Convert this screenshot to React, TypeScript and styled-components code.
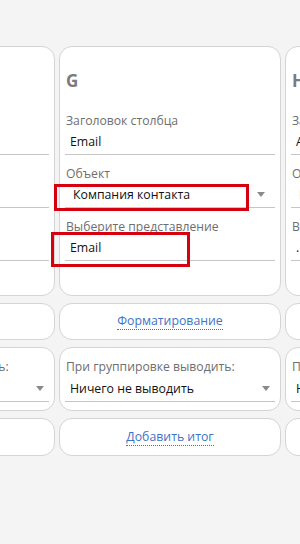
import React from 'react';
import styled, { createGlobalStyle } from 'styled-components';

const GlobalStyle = createGlobalStyle`
  html, body {
    margin: 0;
    padding: 0;
    background: #f4f4f4;
    overflow: hidden;
    font-family: "Open Sans", "Noto Sans", Arial, sans-serif;
  }
`;

const Viewport = styled.div`
  width: 300px;
  height: 544px;
  overflow: hidden;
  padding-top: 46px;
  box-sizing: border-box;
`;

const Strip = styled.div`
  display: flex;
  gap: 4px;
  margin-left: -167px;
`;

const Column = styled.div`
  flex: 0 0 222px;
  display: flex;
  flex-direction: column;
  gap: 7px;
`;

const Card = styled.div`
  background: #fff;
  border: 1px solid #d4d4d4;
  border-radius: 13px;
  box-sizing: border-box;
`;

const MainCard = styled(Card)`
  height: 250px;
  padding: 22px 5px 0;
`;

const Title = styled.div`
  font-size: 17px;
  font-weight: 700;
  line-height: 24px;
  color: #7b7b7b;
  padding-left: 1px;
  margin-bottom: 19px;
`;

const Field = styled.div`
  & + & {
    margin-top: 10px;
  }
`;

const Label = styled.div`
  font-size: 12.2px;
  line-height: 17px;
  color: #6e6e6e;
  white-space: nowrap;
  overflow: hidden;
  padding-left: 1px;
`;

const ValueBox = styled.div<{ $h: number }>`
  position: relative;
  height: ${(p) => p.$h}px;
  box-sizing: border-box;
  border-bottom: 1px solid #c6c6c6;
  display: flex;
  align-items: center;
  padding-left: 5px;
  font-size: 12.3px;
  color: #111;
  white-space: nowrap;
`;

const SelectText = styled.span`
  padding-left: 3px;
`;

const Caret = styled.span<{ $inset: number }>`
  margin-left: auto;
  margin-right: ${(p) => p.$inset}px;
  width: 0;
  height: 0;
  border-left: 4px solid transparent;
  border-right: 4px solid transparent;
  border-top: 5px solid #8a8a8a;
`;

// red annotation boxes drawn over the fields
const Highlight = styled.div<{ $top: number; $left: number; $w: number; $h: number }>`
  position: absolute;
  top: ${(p) => p.$top}px;
  left: ${(p) => p.$left}px;
  width: ${(p) => p.$w}px;
  height: ${(p) => p.$h}px;
  box-sizing: border-box;
  border: 3px solid #d6000f;
  pointer-events: none;
`;

const LinkCard = styled(Card)<{ $h: number }>`
  height: ${(p) => p.$h}px;
  display: flex;
  align-items: center;
  justify-content: center;
`;

const Link = styled.a`
  font-size: 12.3px;
  line-height: 16px;
  color: #3f73c6;
  text-decoration: none;
  border-bottom: 1px dotted #3f73c6;
  white-space: nowrap;
  cursor: pointer;
`;

const GroupCard = styled(Card)`
  height: 64px;
  padding: 10px 5px 0;
`;

type Col = {
  letter: string;
  caption: string;
  object: string;
  objectSelect: boolean;
  view: string;
  marked?: boolean;
};

const columns: Col[] = [
  { letter: 'F', caption: 'Телефон', object: 'Контакт', objectSelect: false, view: 'Телефон' },
  { letter: 'G', caption: 'Email', object: 'Компания контакта', objectSelect: true, view: 'Email', marked: true },
  { letter: 'H', caption: 'Адрес', object: 'Компания', objectSelect: true, view: '.' },
];

const ColumnBlock: React.FC<{ col: Col }> = ({ col }) => (
  <Column>
    <MainCard>
      <Title>{col.letter}</Title>
      <Field>
        <Label>Заголовок столбца</Label>
        <ValueBox $h={26}>{col.caption}</ValueBox>
      </Field>
      <Field>
        <Label>Объект</Label>
        <ValueBox $h={26}>
          <SelectText>{col.object}</SelectText>
          {col.objectSelect && <Caret $inset={10} />}
          {col.marked && <Highlight $top={2} $left={-11} $w={195} $h={27} />}
        </ValueBox>
      </Field>
      <Field>
        <Label>Выберите представление</Label>
        <ValueBox $h={26}>
          {col.view}
          {col.marked && <Highlight $top={-3} $left={-14} $w={139} $h={35} />}
        </ValueBox>
      </Field>
    </MainCard>
    <LinkCard $h={37}>
      <Link>Форматирование</Link>
    </LinkCard>
    <GroupCard>
      <Label>При группировке выводить:</Label>
      <ValueBox $h={27}>
        Ничего не выводить
        <Caret $inset={5} />
      </ValueBox>
    </GroupCard>
    <LinkCard $h={38}>
      <Link>Добавить итог</Link>
    </LinkCard>
  </Column>
);

export default function App() {
  return (
    <>
      <GlobalStyle />
      <Viewport>
        <Strip>
          {columns.map((c) => (
            <ColumnBlock key={c.letter} col={c} />
          ))}
        </Strip>
      </Viewport>
    </>
  );
}
